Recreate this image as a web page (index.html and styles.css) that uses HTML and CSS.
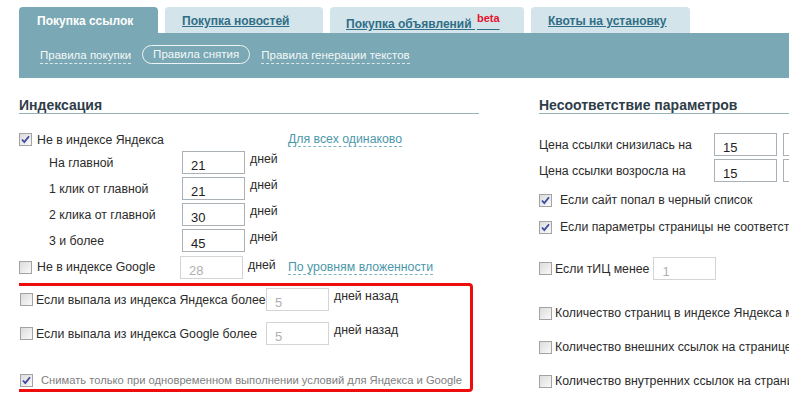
FILE: index.html
```html
<!DOCTYPE html>
<html lang="ru">
<head>
  <meta charset="UTF-8" />
  <title>Правила снятия</title>
  <link rel="stylesheet" href="styles.css">
</head>
<body>
  <div class="page">
    <div class="tabs">
      <div class="tab active t1">Покупка ссылок</div>
      <div class="tab t2"><a href="#">Покупка новостей</a></div>
      <div class="tab t3"><a href="#">Покупка объявлений <sup class="beta">beta</sup></a></div>
      <div class="tab t4"><a href="#">Квоты на установку</a></div>
    </div>
    <div class="subnav">
      <span class="sub">Правила покупки</span>
      <span class="sub current">Правила снятия</span>
      <span class="sub">Правила генерации текстов</span>
    </div>

    <div class="content">
      <div class="col left">
        <h3 class="head">Индексация</h3>

        <div class="row first">
          <span class="cb on"><svg viewBox="0 0 13 13"><path d="M3 6.5l2.3 2.6L10 3.2" fill="none" stroke="#3b4aa0" stroke-width="1.8"/></svg></span>
          <span class="lbl w-yandex">Не в индексе Яндекса</span>
          <span class="dash-link">Для всех одинаково</span>
        </div>
        <div class="sub-row"><span class="sub-lbl">На главной</span><span class="inp">21</span><span class="unit">дней</span></div>
        <div class="sub-row"><span class="sub-lbl">1 клик от главной</span><span class="inp">21</span><span class="unit">дней</span></div>
        <div class="sub-row"><span class="sub-lbl">2 клика от главной</span><span class="inp">30</span><span class="unit">дней</span></div>
        <div class="sub-row"><span class="sub-lbl">3 и более</span><span class="inp">45</span><span class="unit">дней</span></div>

        <div class="row google">
          <span class="cb"></span>
          <span class="lbl w-google">Не в индексе Google</span>
          <span class="inp off">28</span><span class="unit wide">дней</span>
          <span class="dash-link">По уровням вложенности</span>
        </div>

        <div class="marked">
          <div class="row drop">
            <span class="cb"></span>
            <span class="lbl w-drop">Если выпала из индекса Яндекса более</span>
            <span class="inp off">5</span><span class="unit">дней назад</span>
          </div>
          <div class="row drop second">
            <span class="cb"></span>
            <span class="lbl w-drop">Если выпала из индекса Google более</span>
            <span class="inp off">5</span><span class="unit">дней назад</span>
          </div>
          <div class="row both">
            <span class="cb on"><svg viewBox="0 0 13 13"><path d="M3 6.5l2.3 2.6L10 3.2" fill="none" stroke="#3b4aa0" stroke-width="1.8"/></svg></span>
            <span class="note">Снимать только при одновременном выполнении условий для Яндекса и Google</span>
          </div>
        </div>
      </div>

      <div class="col right">
        <h3 class="head">Несоответствие параметров</h3>

        <div class="price-row first"><span class="price-lbl">Цена ссылки снизилась на</span><span class="inp">15</span><span class="inp cut"></span></div>
        <div class="price-row"><span class="price-lbl">Цена ссылки возросла на</span><span class="inp">15</span><span class="inp cut"></span></div>

        <div class="row r-check black">
          <span class="cb on"><svg viewBox="0 0 13 13"><path d="M3 6.5l2.3 2.6L10 3.2" fill="none" stroke="#3b4aa0" stroke-width="1.8"/></svg></span>
          <span class="lbl">Если сайт попал в черный список</span>
        </div>
        <div class="row r-check params">
          <span class="cb on"><svg viewBox="0 0 13 13"><path d="M3 6.5l2.3 2.6L10 3.2" fill="none" stroke="#3b4aa0" stroke-width="1.8"/></svg></span>
          <span class="lbl">Если параметры страницы не соответствуют</span>
        </div>
        <div class="row r-check tic">
          <span class="cb"></span>
          <span class="lbl">Если тИЦ менее</span>
          <span class="inp off">1</span>
        </div>
        <div class="row r-check tight pages">
          <span class="cb"></span>
          <span class="lbl">Количество страниц в индексе Яндекса менее</span>
        </div>
        <div class="row r-check tight next">
          <span class="cb"></span>
          <span class="lbl">Количество внешних ссылок на странице более</span>
        </div>
        <div class="row r-check tight next">
          <span class="cb"></span>
          <span class="lbl">Количество внутренних ссылок на странице более</span>
        </div>
      </div>
    </div>
  </div>
</body>
</html>
```

FILE: styles.css
```css
body {
  margin: 0;
  background: #fff;
  color: #2b2b2b;
  font-family: "Liberation Sans", Arial, sans-serif;
  font-size: 12.3px;
  overflow: hidden;
}
.page {
  padding: 7px 0 0 19px;
}

/* tabs */
.tabs {
  display: flex;
  gap: 7px;
  height: 26px;
}
.tab {
  height: 26px;
  box-sizing: border-box;
  background: #d3e4ea;
  border-radius: 4px 4px 0 0;
  padding: 7px 0 0 17px;
  font-size: 12px;
  font-weight: bold;
  white-space: nowrap;
}
.tab a {
  color: #2f6e86;
  text-decoration: underline;
}
.tab.active {
  background: #7aa8b4;
  color: #fff;
  padding-left: 18px;
}
.t1 { width: 139px; }
.t2 { width: 158px; }
.t3 { width: 194px; padding-left: 16px; padding-top: 10px; }
.t4 { width: 159px; }
.beta {
  color: #e8102a;
  font-size: 11px;
  vertical-align: 6px;
  line-height: 0;
  margin-left: 2px;
}

.subnav {
  height: 45px;
  background: #7aa8b4;
  display: flex;
  align-items: center;
  padding-left: 21px;
  gap: 11px;
}
.sub {
  color: #f4f8f9;
  font-size: 11.5px;
  line-height: 15px;
  border-bottom: 1px dashed #dbe8ec;
}
.sub.current {
  border: 1px solid #eef4f6;
  border-radius: 10px;
  padding: 1px 10px;
  margin-top: -2px;
}

/* columns */
.content {
  display: flex;
  overflow: hidden;
}
.col.left {
  width: 460px;
  flex: none;
}
.col.right {
  margin-left: 60px;
  flex: 1;
  min-width: 0;
  overflow: hidden;
}
.head {
  margin: 19px 0 0;
  padding-bottom: 0;
  border-bottom: 1px solid #95b2bb;
  color: #2e3d48;
  font-size: 14px;
  line-height: 16px;
}

.row {
  display: flex;
  align-items: center;
  height: 20px;
}
.row.first { margin-top: 14px; height: 23px; }
.cb {
  width: 11px;
  height: 11px;
  flex: none;
  border: 1px solid #a3a3a3;
  background: linear-gradient(135deg, #dcdcdc, #f9f9f9);
  position: relative;
}
.cb svg {
  position: absolute;
  left: -1px;
  top: -1px;
  width: 13px;
  height: 13px;
}
.lbl {
  margin-left: 5px;
  white-space: nowrap;
}
.w-yandex { width: 251px; flex: none; }
.w-google { width: 143px; flex: none; }

.dash-link {
  color: #4c98aa;
  border-bottom: 1px dashed #7fb4c2;
  line-height: 14px;
  white-space: nowrap;
}

.sub-row {
  display: flex;
  align-items: center;
  height: 23px;
  margin-top: 3px;
  padding-left: 30px;
}
.row.first + .sub-row { margin-top: 0; }
.sub-lbl { width: 133px; flex: none; }

.inp {
  width: 63px;
  height: 23px;
  box-sizing: border-box;
  flex: none;
  border: 1px solid #a9b1b6;
  padding: 6px 0 0 8px;
  font-size: 13px;
  line-height: 15px;
  color: #222;
  background: #fff;
}
.inp.off {
  border-color: #d2d4d6;
  color: #b0b0b0;
}
.unit {
  margin-left: 5px;
  align-self: flex-start;
  margin-top: 1px;
  white-space: nowrap;
}
.unit.wide { width: 40px; flex: none; }

.row.google {
  height: 22px;
  margin-top: 4px;
}
.row.google .unit { margin-top: 2px; }

/* highlighted block */
.marked {
  margin: 5px 0 0 -11px;
  width: 465px;
  height: 109px;
  box-sizing: border-box;
  border: 3px solid #ee0c0c;
  border-radius: 4px;
  padding: 2px 0 0 9px;
}
.row.drop { height: 23px; }
.row.drop .lbl { margin-left: 3px; }
.w-drop { width: 230px; flex: none; }
.row.drop.second { margin-top: 11px; }
.row.both {
  margin-top: 27px;
  height: 16px;
}
.note {
  margin-left: 8px;
  font-size: 11.2px;
  color: #808080;
  white-space: nowrap;
}

/* right column */
.price-row {
  display: flex;
  align-items: center;
  height: 23px;
  margin-top: 3px;
}
.price-row.first { margin-top: 19px; }
.price-lbl { width: 175px; flex: none; white-space: nowrap; }
.inp.cut { margin-left: 6px; }
.r-check { height: 18px; margin-top: 9px; }
.r-check .lbl { margin-left: 8px; }
.price-row + .r-check { margin-top: 9px; }
.r-check.tic { height: 23px; margin-top: 21px; }
.r-check.tic .lbl,
.r-check.tight .lbl { margin-left: 3px; }
.r-check.tic .inp { margin-left: 4px; }
.r-check.pages { margin-top: 24px; }
.r-check.next { margin-top: 16px; }
```
